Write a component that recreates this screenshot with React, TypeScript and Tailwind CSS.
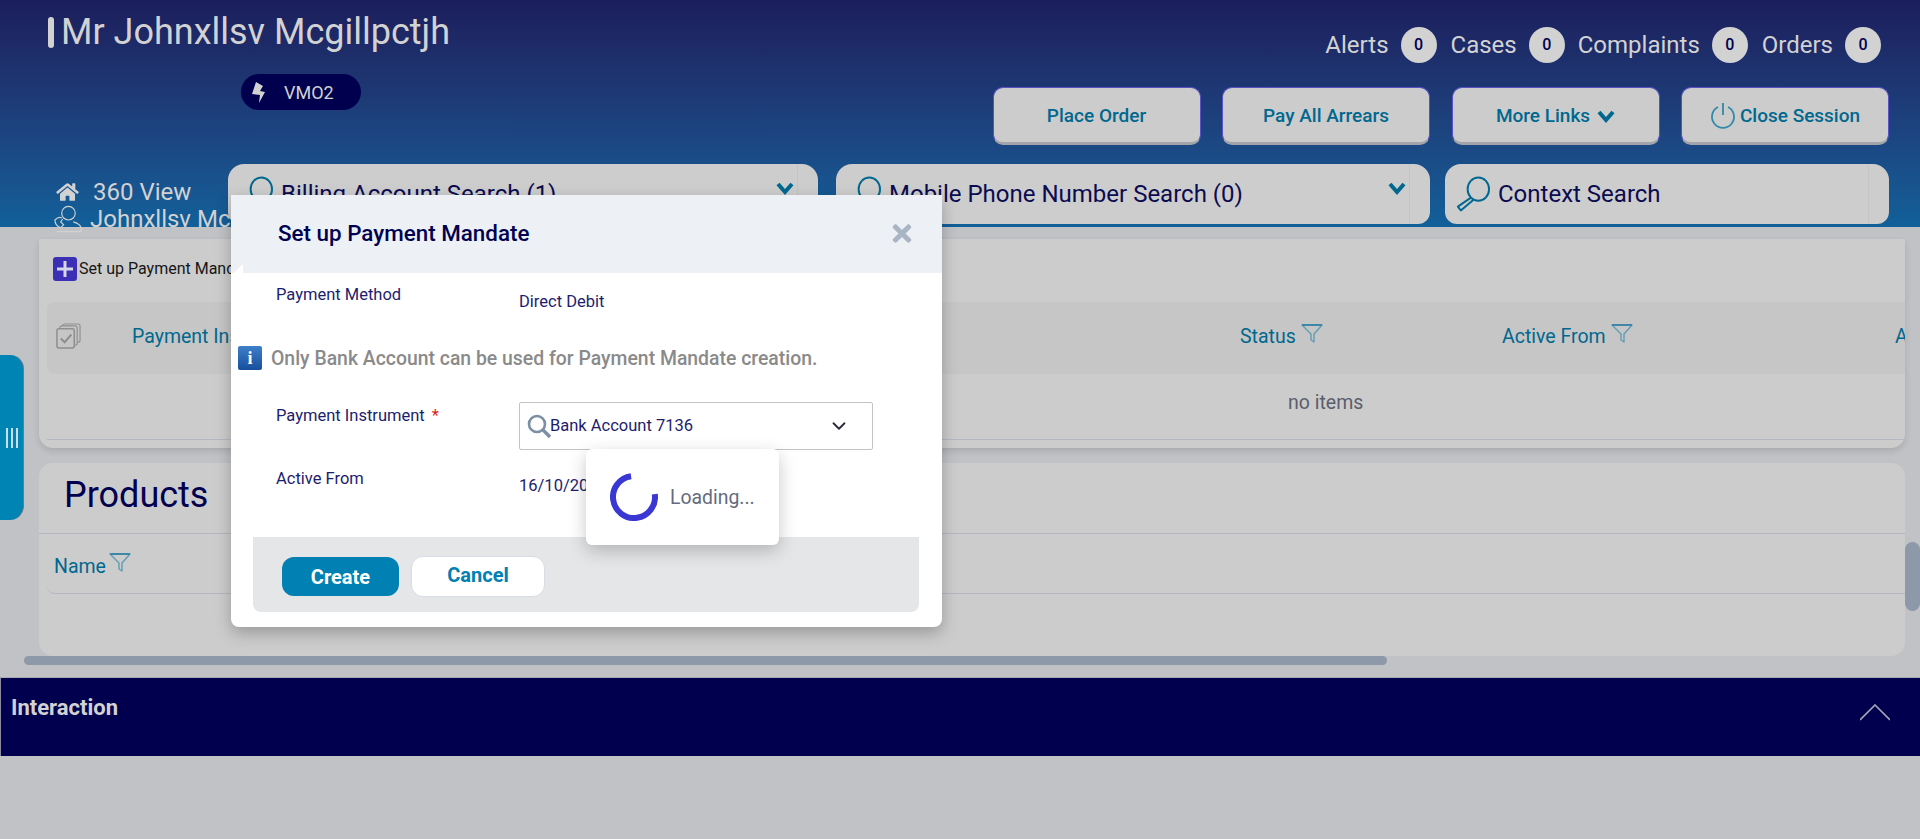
import { FaHome, FaTimes } from 'react-icons/fa';
import { ChevronDown } from 'lucide-react';

function FilterIcon({ className }: { className?: string }) {
  return (
    <svg viewBox="0 0 22 19" className={className} fill="none">
      <path d="M1 1h20l-8 9v8l-3-2v-6z" stroke="#5f9cb6" strokeWidth="1.4" strokeLinejoin="round" />
      <path d="M1 1h20" stroke="#3f87a6" strokeWidth="2" />
    </svg>
  );
}

function KeyIcon({ className }: { className?: string }) {
  return (
    <svg viewBox="0 0 36 36" className={className} fill="none" stroke="#00688f" strokeWidth="2">
      <ellipse cx="24" cy="13" rx="11" ry="12" />
      <path d="M16 22L3 31l3 4 13-11" strokeLinejoin="round" />
    </svg>
  );
}

function BoldChevron({ className }: { className?: string }) {
  return (
    <svg viewBox="0 0 18 13" className={className} fill="none" stroke="#00688f" strokeWidth="4">
      <path d="M2 2l7 8 7-8" />
    </svg>
  );
}

function TopButton({ label, children }: { label?: string; children?: React.ReactNode }) {
  return (
    <button className="w-[208px] h-[58px] pt-[2px] flex items-center justify-center gap-1 rounded-[10px] border border-[#5a50c8] border-b-[3px] border-b-[#a3a3ab] bg-[#cccccc] text-[19px] font-medium text-[#00688f]">
      {children}
      {label}
    </button>
  );
}

function Counter({ label, className }: { label: string; className?: string }) {
  return (
    <div className={`flex items-center ${className ?? ''}`}>
      <span className="text-[24px] text-[#d2d2d2]">{label}</span>
      <span className="ml-[12px] w-[36px] h-[36px] rounded-full bg-[#d2d2d2] flex items-center justify-center text-[16px] font-medium text-[#00004f]">
        0
      </span>
    </div>
  );
}

function SearchBar({ label, width, dropdown }: { label: string; width: string; dropdown?: boolean }) {
  return (
    <div className={`${width} h-[60px] relative flex items-center pl-[10px] rounded-t-[16px] rounded-b-[12px] bg-[#cdcdcd]`}>
      <KeyIcon className="w-[35px] h-[36px] shrink-0" />
      <span className="ml-[8px] text-[24px] text-[#0b0b50]">{label}</span>
      {dropdown && <BoldChevron className="absolute right-[24px] top-[18px] w-[18px] h-[13px]" />}
      <div className="absolute right-[20px] top-0 bottom-0 w-px bg-[#c4c4c4]" />
    </div>
  );
}

function ColumnHead({ label, className }: { label: string; className?: string }) {
  return (
    <div className={`flex items-center gap-[5px] absolute top-[23px] ${className ?? ''}`}>
      <span className="text-[19.5px] text-[#00688f] leading-[24px]">{label}</span>
      <FilterIcon className="w-[22px] h-[19px] -mt-[7px]" />
    </div>
  );
}

export default function App() {
  return (
    <div className="relative h-[839px] overflow-hidden bg-[#c1c2c6] font-['Roboto',sans-serif]">
      {/* Header */}
      <header className="h-[227px] bg-gradient-to-b from-[#1c1e5c] to-[#11609a]">
        <div className="h-[164px] flex justify-between">
          <div className="pl-[48px] pt-[17px]">
            <div className="flex items-center h-[31px]">
              <div className="w-[6px] h-[31px] rounded-[3px] bg-[#d2d2d2]" />
              <span className="ml-[7px] -mt-[1px] text-[36px] text-[#d2d2d2] whitespace-nowrap">Mr Johnxllsv Mcgillpctjh</span>
            </div>
            <div className="ml-[193px] mt-[26px] w-[120px] h-[36px] rounded-[18px] bg-[#00004f] flex items-center pl-[11px]">
              <svg viewBox="0 0 13 21" className="w-[13px] h-[21px]">
                <path d="M4 0l7 4-3 5 5 1-6 11 1-8-8-1z" fill="#d2d2d2" />
              </svg>
              <span className="ml-[19px] text-[18px] text-[#d2d2d2]">VMO2</span>
            </div>
          </div>
          <div className="pr-[31px] pt-[27px] flex flex-col items-end">
            <div className="flex items-center pr-[8px]">
              <Counter label="Alerts" />
              <Counter label="Cases" className="ml-[14px]" />
              <Counter label="Complaints" className="ml-[13px]" />
              <Counter label="Orders" className="ml-[14px]" />
            </div>
            <div className="flex gap-[21.5px] mt-[24px]">
              <TopButton label="Place Order" />
              <TopButton label="Pay All Arrears" />
              <TopButton label="More Links">
                <span className="order-last ml-[3px]">
                  <BoldChevron className="w-[18px] h-[13px]" />
                </span>
              </TopButton>
              <TopButton label="Close Session">
                <svg viewBox="0 0 26 28" className="w-[26px] h-[28px]" fill="none" stroke="#2f8aab" strokeWidth="1.8">
                  <path d="M8 5a11 11 0 1 0 10 0" />
                  <path d="M13 1v12" />
                </svg>
              </TopButton>
            </div>
          </div>
        </div>
        <div className="flex">
          <div className="w-[228px] pl-[53px] text-[24px] text-[#d2d2d2] leading-[26px] whitespace-nowrap">
            <div className="flex items-center pt-[15px]">
              <FaHome className="ml-[2px] w-[25px] h-[20px]" />
              <span className="ml-[13px]">360 View</span>
            </div>
            <div className="flex items-center">
              <svg viewBox="0 0 30 28" className="w-[29px] h-[28px] shrink-0" fill="none" stroke="#d2d2d2" strokeWidth="1.2">
                <circle cx="16" cy="8" r="7" />
                <path d="M9 13c-3-2-5 0-7 2 0 4 3 7 6 8l3-3-3-3 2-3" />
                <path d="M4 27h25v-4c-1-3-4-5-8-6" />
              </svg>
              <span className="ml-[8px]">Johnxllsv Mc</span>
            </div>
          </div>
          <div className="flex">
            <SearchBar label="Billing Account Search (1)" width="w-[590px]" dropdown />
            <div className="w-[18px]" />
            <SearchBar label="Mobile Phone Number Search (0)" width="w-[594px]" dropdown />
            <div className="w-[15px]" />
            <SearchBar label="Context Search" width="w-[444px]" />
          </div>
        </div>
      </header>

      {/* Main content */}
      <main className="pl-[39px] pr-[15px] pt-[12px]">
        <section className="h-[209px] rounded-b-[14px] bg-[#cccccc] shadow-[0_3px_6px_rgba(0,0,0,0.12)] overflow-hidden">
          <div className="h-[63px] flex items-center pl-[14px]">
            <div className="w-[24px] h-[24px] -mt-[4px] rounded-[3px] bg-[#3a2fb5] flex items-center justify-center">
              <svg viewBox="0 0 16 16" className="w-[16px] h-[16px]" stroke="#d6d6e8" strokeWidth="3">
                <path d="M8 0v16M0 8h16" />
              </svg>
            </div>
            <span className="ml-[2px] -mt-[4px] text-[16px] text-[#161616]">Set up Payment Mandate</span>
          </div>
          <div className="relative ml-[8px] h-[72px] rounded-l-[8px] bg-[#c6c6c6] overflow-hidden">
            <svg viewBox="0 0 26 27" className="absolute left-[9px] top-[21px] w-[25px] h-[26px]" fill="none" stroke="#8f8f8f" strokeWidth="1.2">
              <rect x="7" y="1" width="18" height="19" rx="2" />
              <rect x="4" y="3" width="18" height="20" rx="2" fill="#c6c6c6" />
              <rect x="1" y="6" width="18" height="20" rx="2" fill="#c6c6c6" strokeWidth="1.6" />
              <path d="M5 16l4 4 7-8" strokeWidth="2.2" />
            </svg>
            <span className="absolute left-[85px] top-[23px] text-[19.5px] leading-[24px] text-[#00688f] whitespace-nowrap">Payment Instrument</span>
            <ColumnHead label="Status" className="left-[1193px]" />
            <ColumnHead label="Active From" className="left-[1455px]" />
            <span className="absolute left-[1848px] top-[23px] text-[19.5px] leading-[24px] text-[#00688f] whitespace-nowrap">Active To</span>
          </div>
          <div className="ml-[8px] h-[66px] border-b border-[#b4b8c4] pl-[1241px] pt-[17px] text-[19.5px] leading-[24px] text-[#5a5e6c]">
            no items
          </div>
        </section>

        <section className="mt-[15px] h-[193px] rounded-b-[14px] rounded-t-[14px] bg-[#cccccc]">
          <h2 className="h-[71px] pl-[25px] pt-[10px] text-[36px] leading-[44px] text-[#00004f] border-b border-[#b4b8c4]">
            Products
          </h2>
          <div className="ml-[8px] h-[60px] pl-[7px] pt-[21px] flex items-start gap-[3px] border-b border-[#b4b8c4] rounded-bl-[8px]">
            <span className="text-[19.5px] leading-[24px] text-[#00688f]">Name</span>
            <FilterIcon className="w-[22px] h-[19px] -mt-[2px]" />
          </div>
        </section>

        <div className="-ml-[15px] h-[9px] w-[1881px] relative">
          <div className="w-[1363px] h-[9px] rounded-[5px] bg-[#8d98a8]" />
        </div>
      </main>

      {/* Interaction bar */}
      <div className="mt-[12px] h-[79px] flex items-center justify-between pl-[10px] pr-[30px] pb-[20px] bg-[#00004f] border-t border-t-[#a8aab4] border-l border-l-[#8a8aa0]">
        <span className="text-[22px] font-bold text-[#d2d2d2]">Interaction</span>
        <svg viewBox="0 0 30 17" className="w-[30px] h-[17px] mt-[10px]" fill="none" stroke="#a5a5b5" strokeWidth="1.6">
          <path d="M0 16L15 1l15 15" />
        </svg>
      </div>

      {/* Vertical scrollbar */}
      <div className="absolute left-[1905px] top-[542px] w-[15px] h-[69px] rounded-[8px] bg-[#8d98a8]" />

      {/* Side handle */}
      <div className="absolute left-0 top-[355px] w-[24px] h-[165px] rounded-r-[14px] bg-[#0084b4] border-r border-[#6f7a80] flex items-center justify-center gap-[3px]">
        <div className="w-[2px] h-[20px] bg-[#c9dfe8]" />
        <div className="w-[2px] h-[20px] bg-[#c9dfe8]" />
        <div className="w-[2px] h-[20px] bg-[#c9dfe8]" />
      </div>

      {/* Modal */}
      <div className="absolute left-[231px] top-[195px] w-[711px] h-[432px] rounded-b-[8px] bg-white shadow-[0_6px_16px_rgba(0,0,0,0.25)]">
        <div className="relative h-[78px] bg-[#edf0f5] flex items-center justify-between pl-[47px] pr-[28px]">
          <span className="text-[22.4px] font-medium text-[#00004f] -mt-[1px]">Set up Payment Mandate</span>
          <FaTimes className="w-[24px] h-[27px] text-[#a9b4c4] -mt-[1px]" />
          <svg viewBox="0 0 9 9" className="absolute left-[3px] bottom-0 w-[9px] h-[9px]">
            <path d="M9 0v9H0z" fill="#ffffff" />
          </svg>
        </div>
        <div className="h-[73px] flex items-start pl-[45px] text-[16.5px] text-[#1d1d6e]">
          <span className="w-[243px] pt-[12px] leading-[20px]">Payment Method</span>
          <span className="pt-[19px] leading-[20px]">Direct Debit</span>
        </div>
        <div className="h-[24px] flex items-center pl-[7px]">
          <div className="w-[24px] h-[24px] rounded-[2px] bg-gradient-to-b from-[#3f7fc9] to-[#184f9e] flex items-center justify-center font-['Liberation_Serif',serif] font-bold text-[18px] text-white">
            i
          </div>
          <span className="ml-[9px] mt-[2px] text-[19.4px] font-medium text-[#8a8a8a] whitespace-nowrap">
            Only Bank Account can be used for Payment Mandate creation.
          </span>
        </div>
        <div className="mt-[32px] h-[48px] flex items-start pl-[45px] text-[16.5px] text-[#1d1d6e]">
          <span className="w-[243px] pt-[4px] leading-[20px]">
            Payment Instrument <span className="ml-[3px] text-[#e02020]">*</span>
          </span>
          <div className="w-[354px] h-[48px] flex items-center pl-[7px] pr-[22px] rounded-[2px] border border-[#c4c4c4]">
            <svg viewBox="0 0 24 24" className="w-[24px] h-[24px] shrink-0" fill="none" stroke="#7d8ea5" strokeWidth="2.6">
              <circle cx="10" cy="10" r="8" />
              <path d="M16 16l7 7" strokeWidth="3.4" />
            </svg>
            <span className="-ml-[1px] mt-[1px] text-[16.5px]">Bank Account 7136</span>
            <ChevronDown className="ml-auto w-[22px] h-[22px] text-[#2a2a3a]" />
          </div>
        </div>
        <div className="h-[87px] flex items-start pl-[45px] text-[16.5px] text-[#1d1d6e]">
          <span className="w-[243px] pt-[19px] leading-[20px]">Active From</span>
          <span className="pt-[26px] leading-[20px]">16/10/20</span>
        </div>
        <div className="ml-[22px] w-[666px] h-[75px] rounded-b-[8px] bg-[#e5e6e7] flex items-start pt-[19px] pl-[29px]">
          <button className="mt-[1px] w-[117px] h-[39px] rounded-[12px] bg-[#0080b3] text-[20px] font-bold text-white">Create</button>
          <button className="ml-[12px] w-[134px] h-[41px] pb-[3px] rounded-[12px] border border-[#d8dce5] bg-white text-[20px] font-bold text-[#0080b3]">Cancel</button>
        </div>
      </div>

      {/* Loading popup */}
      <div className="absolute left-[586px] top-[449px] w-[193px] h-[96px] rounded-[6px] bg-white shadow-[0_6px_18px_rgba(0,0,0,0.22)] flex items-center pl-[24px]">
        <svg viewBox="0 0 48 48" className="w-[48px] h-[48px] shrink-0" fill="none" stroke="#3b37d4" strokeWidth="6">
          <path d="M24 3a21 21 0 1 0 21 21" transform="rotate(-8 24 24)" />
        </svg>
        <span className="ml-[12px] mt-[1px] text-[19.4px] text-[#646b80]">Loading...</span>
      </div>
    </div>
  );
}
